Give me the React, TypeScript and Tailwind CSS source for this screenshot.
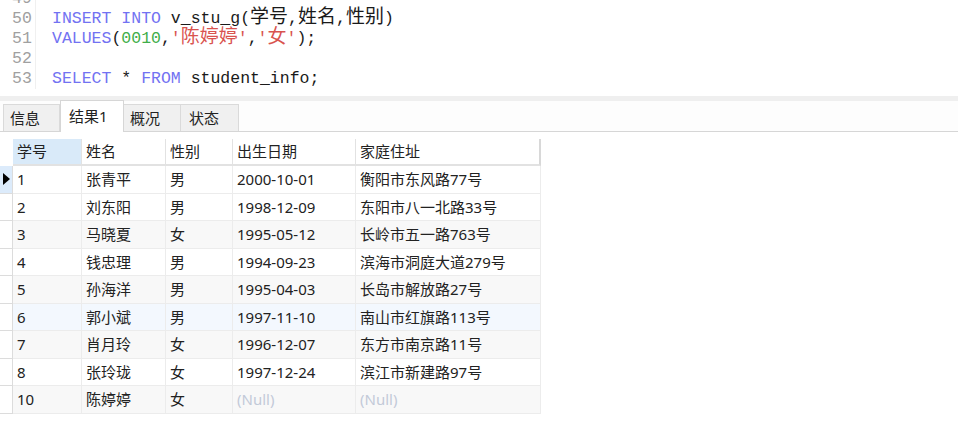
import React from "react";

const kw = "text-[#7272f2]";
const cjk = "text-[19px] leading-none";

const rows = [
  ["1", "张青平", "男", "2000-10-01", "衡阳市东风路77号"],
  ["2", "刘东阳", "男", "1998-12-09", "东阳市八一北路33号"],
  ["3", "马晓夏", "女", "1995-05-12", "长岭市五一路763号"],
  ["4", "钱忠理", "男", "1994-09-23", "滨海市洞庭大道279号"],
  ["5", "孙海洋", "男", "1995-04-03", "长岛市解放路27号"],
  ["6", "郭小斌", "男", "1997-11-10", "南山市红旗路113号"],
  ["7", "肖月玲", "女", "1996-12-07", "东方市南京路11号"],
  ["8", "张玲珑", "女", "1997-12-24", "滨江市新建路97号"],
  ["10", "陈婷婷", "女", null, null],
];

const cols = ["w-[69px]", "w-[84px]", "w-[67px]", "w-[123px]", "w-[185px]"];
const heads = ["学号", "姓名", "性别", "出生日期", "家庭住址"];

function CodeLine({ n, children }: { n: number; children?: React.ReactNode }) {
  return (
    <div className="flex h-[20px] items-center">
      <div className="w-[36px] shrink-0 pl-[12px] text-[#a0a0a0] border-r border-[#f0f0f0] h-full flex items-center">
        {n}
      </div>
      <div className="pl-[16px] whitespace-pre leading-[20px]">{children}</div>
    </div>
  );
}

export default function App() {
  return (
    <div
      className="w-[958px] h-[430px] bg-white overflow-hidden text-[#222]"
      style={{ fontFamily: '"Noto Sans", "Noto Sans CJK SC", sans-serif' }}
    >
      {/* editor */}
      <div className="h-[96px] overflow-hidden bg-white">
        <div
          className="-mt-[11px] text-[16.5px] text-[#1a1a1a]"
          style={{ fontFamily: '"Liberation Mono", "Noto Sans CJK SC", monospace' }}
        >
          <CodeLine n={49} />
          <CodeLine n={50}>
            <span className={kw}>INSERT</span> <span className={kw}>INTO</span> v_stu_g(
            <span className={cjk}>学号</span>,<span className={cjk}>姓名</span>,<span className={cjk}>性别</span>)
          </CodeLine>
          <CodeLine n={51}>
            <span className={kw}>VALUES</span>(<span className="text-[#3fae49]">0010</span>,
            <span className="text-[#d9534f]">
              '<span className={cjk}>陈婷婷</span>'
            </span>
            ,
            <span className="text-[#d9534f]">
              '<span className={cjk}>女</span>'
            </span>
            );
          </CodeLine>
          <CodeLine n={52} />
          <CodeLine n={53}>
            <span className={kw}>SELECT</span> * <span className={kw}>FROM</span> student_info;
          </CodeLine>
        </div>
      </div>
      <div className="h-[5px] bg-[#efefef]" />

      {/* tabs */}
      <div className="h-[31px] flex items-end pl-[3px] border-b border-[#d6d6d6] bg-[#fdfdfd] text-[15px]">
        <div className="w-[57px] h-[27px] bg-[#f0f0f0] border border-b-0 border-[#dadada] flex items-center pl-[6px]">
          信息
        </div>
        <div className="w-[64px] h-[32px] -mb-px bg-white border border-b-0 border-[#d6d6d6] flex items-center pl-[8px] relative">
          结果1
        </div>
        <div className="w-[57px] h-[27px] bg-[#f0f0f0] border border-b-0 border-l-0 border-[#dadada] flex items-center pl-[6px]">
          概况
        </div>
        <div className="w-[58px] h-[27px] bg-[#f0f0f0] border border-b-0 border-l-0 border-[#dadada] flex items-center pl-[8px]">
          状态
        </div>
      </div>

      {/* grid */}
      <div className="pt-[7px] text-[15px]">
        <div className="flex h-[27px]">
          <div className="w-[13px] shrink-0" />
          {heads.map((h, i) => (
            <div
              key={h}
              className={`${cols[i]} shrink-0 flex items-center pl-[4px] border-r border-b-2 border-[#e2e2e2] ${
                i === 0 ? "bg-[#d9eaf9]" : "bg-white"
              } ${i === 4 ? "border-r-2 border-r-[#d8d8d8]" : ""}`}
            >
              {h}
            </div>
          ))}
        </div>
        {rows.map((r, ri) => {
          const bg =
            ri === 5 ? "bg-[#f3f8fe]" : ri > 0 && ri % 2 === 0 ? "bg-[#f8f8f8]" : "bg-white";
          return (
            <div key={ri} className="flex h-[27.5px]">
              <div
                className={`w-[13px] shrink-0 border-b border-r border-[#dcdcdc] flex items-center justify-center ${
                  ri === 0 ? "bg-[#dcebfb]" : "bg-white"
                }`}
              >
                {ri === 0 && (
                  <svg width="7" height="12" viewBox="0 0 7 12">
                    <path d="M0 0 L7 6 L0 12 Z" fill="#000" />
                  </svg>
                )}
              </div>
              {r.map((c, ci) => (
                <div
                  key={ci}
                  className={`${cols[ci]} shrink-0 flex items-center pl-[4px] border-r border-b border-[#ececec] ${bg}`}
                >
                  {c === null ? <span className="text-[#c3cad8]">(Null)</span> : c}
                </div>
              ))}
            </div>
          );
        })}
      </div>
    </div>
  );
}
